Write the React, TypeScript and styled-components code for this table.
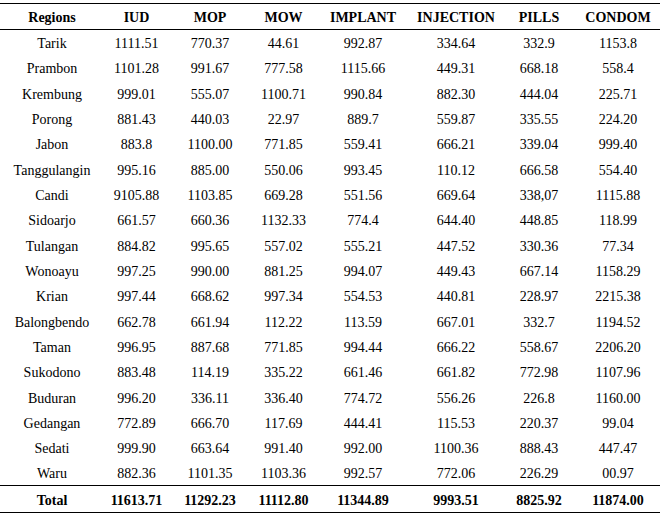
import React from "react";
import styled, { createGlobalStyle } from "styled-components";

type Row = [string, string, string, string, string, string, string, string];

const COLUMNS = ["Regions", "IUD", "MOP", "MOW", "IMPLANT", "INJECTION", "PILLS", "CONDOM"];
const WIDTHS = [104, 65, 82, 65, 94, 92, 74, 84];

const ROWS: Row[] = [
  ["Tarik", "1111.51", "770.37", "44.61", "992.87", "334.64", "332.9", "1153.8"],
  ["Prambon", "1101.28", "991.67", "777.58", "1115.66", "449.31", "668.18", "558.4"],
  ["Krembung", "999.01", "555.07", "1100.71", "990.84", "882.30", "444.04", "225.71"],
  ["Porong", "881.43", "440.03", "22.97", "889.7", "559.87", "335.55", "224.20"],
  ["Jabon", "883.8", "1100.00", "771.85", "559.41", "666.21", "339.04", "999.40"],
  ["Tanggulangin", "995.16", "885.00", "550.06", "993.45", "110.12", "666.58", "554.40"],
  ["Candi", "9105.88", "1103.85", "669.28", "551.56", "669.64", "338,07", "1115.88"],
  ["Sidoarjo", "661.57", "660.36", "1132.33", "774.4", "644.40", "448.85", "118.99"],
  ["Tulangan", "884.82", "995.65", "557.02", "555.21", "447.52", "330.36", "77.34"],
  ["Wonoayu", "997.25", "990.00", "881.25", "994.07", "449.43", "667.14", "1158.29"],
  ["Krian", "997.44", "668.62", "997.34", "554.53", "440.81", "228.97", "2215.38"],
  ["Balongbendo", "662.78", "661.94", "112.22", "113.59", "667.01", "332.7", "1194.52"],
  ["Taman", "996.95", "887.68", "771.85", "994.44", "666.22", "558.67", "2206.20"],
  ["Sukodono", "883.48", "114.19", "335.22", "661.46", "661.82", "772.98", "1107.96"],
  ["Buduran", "996.20", "336.11", "336.40", "774.72", "556.26", "226.8", "1160.00"],
  ["Gedangan", "772.89", "666.70", "117.69", "444.41", "115.53", "220.37", "99.04"],
  ["Sedati", "999.90", "663.64", "991.40", "992.00", "1100.36", "888.43", "447.47"],
  ["Waru", "882.36", "1101.35", "1103.36", "992.57", "772.06", "226.29", "00.97"],
];

const TOTAL: Row = ["Total", "11613.71", "11292.23", "11112.80", "11344.89", "9993.51", "8825.92", "11874.00"];

const GlobalStyle = createGlobalStyle`
  html, body {
    margin: 0;
    padding: 0;
    background: #ffffff;
  }
  body {
    padding-top: 3px;
    font-family: "Liberation Serif", "Times New Roman", serif;
    color: #000000;
  }
`;

const Table = styled.table`
  width: 660px;
  border-collapse: collapse;
  table-layout: fixed;
  font-size: 14px;
  border-top: 1px solid #000;
  border-bottom: 1px solid #000;
`;

const HeadRow = styled.tr`
  height: 26px;
  border-bottom: 1px solid #000;
`;

const BodyRow = styled.tr`
  height: 25.33px;
`;

const TotalRow = styled.tr`
  height: 27px;
  border-top: 1px solid #000;
`;

const Cell = styled.td<{ $bold?: boolean }>`
  padding: 4px 0 0;
  text-align: center;
  vertical-align: middle;
  font-weight: ${({ $bold }) => ($bold ? 700 : 400)};
  white-space: nowrap;
`;

const HeadCell = styled.th`
  padding: 3px 0 0;
  text-align: center;
  vertical-align: middle;
  font-weight: 700;
  white-space: nowrap;
`;

export default function App() {
  return (
    <>
      <GlobalStyle />
      <Table>
        <colgroup>
          {WIDTHS.map((w, i) => (
            <col key={i} style={{ width: w }} />
          ))}
        </colgroup>
        <thead>
          <HeadRow>
            {COLUMNS.map((c) => (
              <HeadCell key={c}>{c}</HeadCell>
            ))}
          </HeadRow>
        </thead>
        <tbody>
          {ROWS.map((row) => (
            <BodyRow key={row[0]}>
              {row.map((v, i) => (
                <Cell key={i}>{v}</Cell>
              ))}
            </BodyRow>
          ))}
          <TotalRow>
            {TOTAL.map((v, i) => (
              <Cell key={i} $bold>
                {v}
              </Cell>
            ))}
          </TotalRow>
        </tbody>
      </Table>
    </>
  );
}
